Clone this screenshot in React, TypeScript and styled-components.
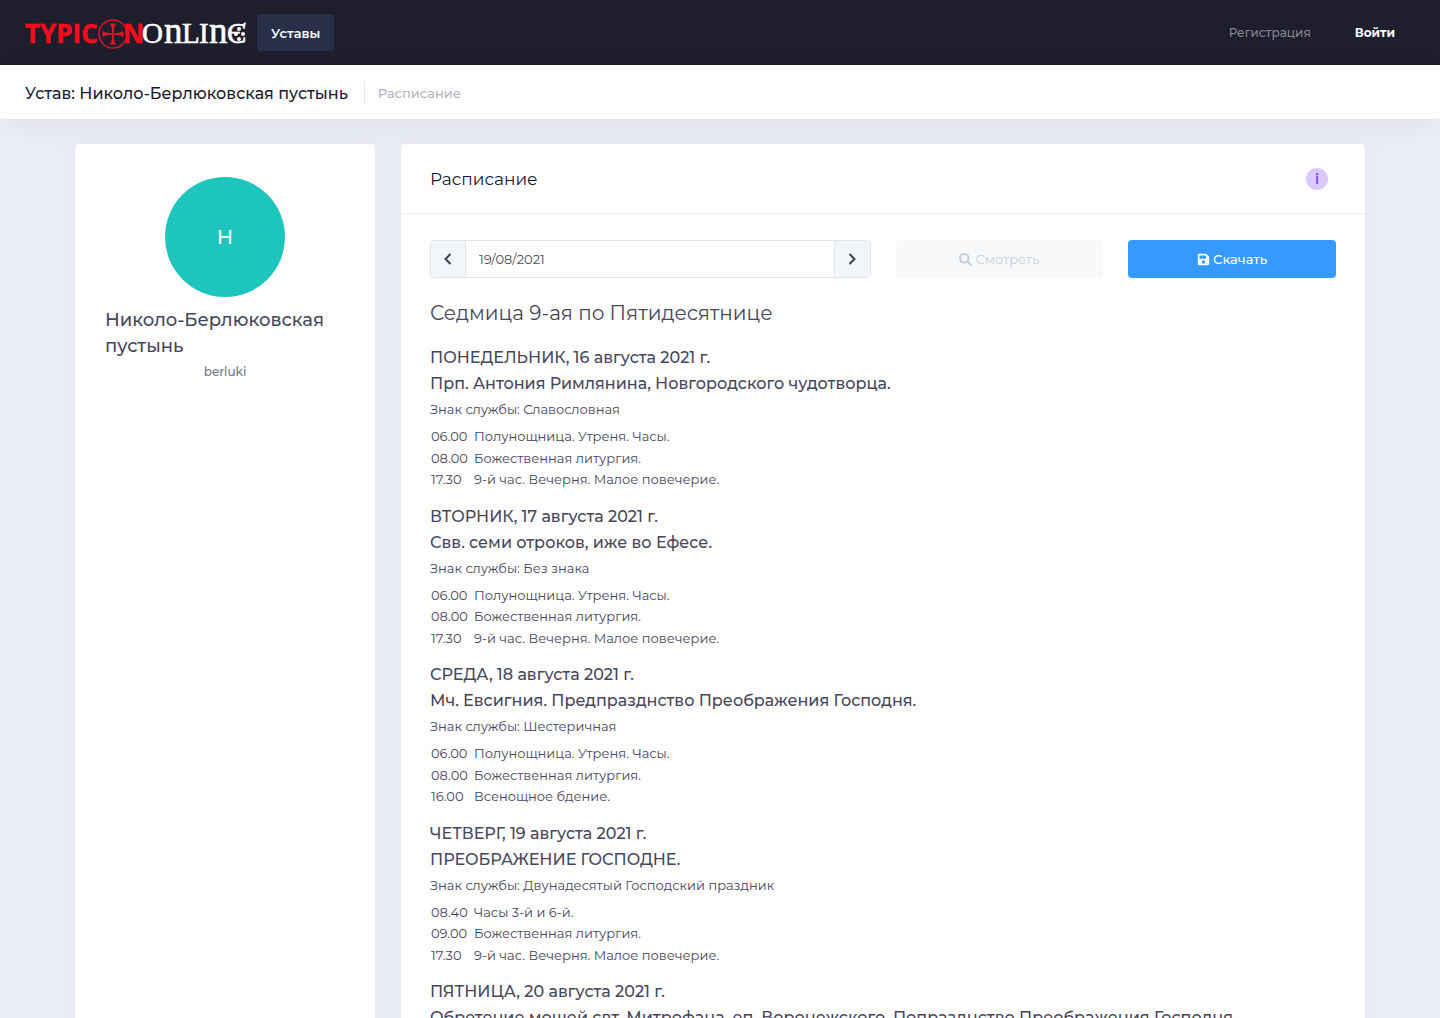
import React, { useState } from "react";
import styled, { createGlobalStyle } from "styled-components";
import { FaSave, FaSearch } from "react-icons/fa";

const GlobalStyle = createGlobalStyle`
  *, *::before, *::after { box-sizing: border-box; }
  html { scrollbar-width: none; }
  body {
    margin: 0;
    background: #edeff8;
    color: #48465b;
    font-family: Montserrat, Inter, "Noto Sans", sans-serif;
    font-size: 13px;
    font-weight: 400;
  }
  h1, h2, h3, h4, p { margin: 0; font-weight: 400; }
  button, input { font: inherit; color: inherit; margin: 0; }
  a { color: inherit; text-decoration: none; }
`;

const Page = styled.div`
  display: flex;
  flex-direction: column;
  min-height: 100vh;
`;

const TopBar = styled.header`
  display: flex;
  align-items: center;
  justify-content: space-between;
  height: 65px;
  padding: 0 24px;
  background: #1e1e2d;
`;

const TopGroup = styled.div`
  display: flex;
  align-items: center;
  gap: 8px;
`;

const BrandLink = styled.a`
  display: block;
`;

const LogoDrawing = styled.svg`
  display: block;
`;

const MenuLink = styled.a`
  display: flex;
  align-items: center;
  height: 37px;
  padding: 0 14px;
  border-radius: 4px;
  background: #282f48;
  color: #fff;
  font-weight: 600;
`;

const UserNav = styled.nav`
  display: flex;
  gap: 44px;
  padding-right: 21px;
`;

const UserLink = styled.a<{ $strong?: boolean }>`
  color: ${(p) => (p.$strong ? "#fff" : "#868692")};
  font-size: 12px;
  font-weight: ${(p) => (p.$strong ? 700 : 500)};
`;

const SubHeader = styled.div`
  display: flex;
  align-items: center;
  height: 54px;
  padding: 2px 25px 0;
  background: #fff;
  box-shadow: 0 10px 30px rgba(82, 63, 105, 0.08);
`;

const SubTitle = styled.h1`
  color: #1a1a2f;
  font-size: 16px;
  font-weight: 500;
`;

const Divider = styled.span`
  width: 1px;
  height: 22px;
  margin: 0 13px 0 16px;
  background: #e7e8ef;
`;

const Crumb = styled.a`
  color: #b4b3c0;
  font-weight: 500;
`;

const Main = styled.main`
  display: flex;
  flex: 1;
  align-items: stretch;
  gap: 26px;
  width: 100%;
  max-width: 1340px;
  margin: 0 auto;
  padding: 25px 25px;
`;

const Card = styled.section`
  border-radius: 4px;
  background: #fff;
  box-shadow: 0 0 30px rgba(82, 63, 105, 0.05);
`;

const ProfileCard = styled(Card)`
  display: flex;
  flex: 0 0 300px;
  flex-direction: column;
  align-items: center;
  padding: 33px 30px;
`;

const Avatar = styled.div`
  display: flex;
  align-items: center;
  justify-content: center;
  width: 120px;
  height: 120px;
  border-radius: 50%;
  background: #1dc5bd;
  color: #fff;
  font-size: 20px;
  font-weight: 500;
`;

const ProfileName = styled.h3`
  width: 100%;
  margin-top: 10px;
  font-size: 18px;
  font-weight: 500;
  line-height: 26px;
`;

const ProfileId = styled.p`
  margin-top: 3px;
  color: #74788d;
  font-size: 12px;
  font-weight: 500;
  line-height: 20px;
`;

const ScheduleCard = styled(Card)`
  flex: 1;
  min-width: 0;
`;

const CardHead = styled.div`
  display: flex;
  align-items: center;
  justify-content: space-between;
  height: 70px;
  padding: 0 37px 0 29px;
  border-bottom: 1px solid #ebedf2;
`;

const CardTitle = styled.h2`
  color: #1a1a2f;
  font-size: 17px;
`;

const InfoButton = styled.button`
  display: flex;
  align-items: center;
  justify-content: center;
  width: 22px;
  height: 22px;
  padding: 0;
  border: 0;
  border-radius: 50%;
  background: #d9c9fd;
  color: #8045f5;
  font-size: 14px;
  font-weight: 600;
`;

const CardBody = styled.div`
  padding: 26px 29px;
`;

const Controls = styled.form`
  display: grid;
  grid-template-columns: repeat(4, 1fr);
  gap: 25px;
`;

const DateGroup = styled.div`
  display: flex;
  grid-column: span 2;
  height: 38px;
  overflow: hidden;
  border: 1px solid #e2e5ec;
  border-radius: 4px;
`;

const StepButton = styled.button`
  display: flex;
  flex: 0 0 34px;
  align-items: center;
  justify-content: center;
  padding: 0;
  border: 0;
  background: #f3f6f9;

  &:last-child { flex-basis: 35px; }
`;

const DateInput = styled.input`
  flex: 1;
  min-width: 0;
  padding: 0 13px;
  border: solid #e2e5ec;
  border-width: 0 1px;
  outline: 0;
  background: #fff;
  color: #495057;
`;

const ActionButton = styled.button<{ $primary?: boolean }>`
  display: flex;
  align-items: center;
  justify-content: center;
  gap: 3px;
  height: 38px;
  padding: 0;
  border: 0;
  border-radius: 4px;
  background: ${(p) => (p.$primary ? "#3699ff" : "#f7f9fb")};
  color: ${(p) => (p.$primary ? "#fff" : "#c6cfde")};
  font-weight: ${(p) => (p.$primary ? 500 : 400)};
`;

const WeekTitle = styled.h3`
  margin: 20px 0 17px;
  font-size: 20px;
  line-height: 30px;
`;

const DayBlock = styled.article`
  padding-bottom: 13px;
`;

const DayLine = styled.h4`
  font-size: 16px;
  font-weight: 500;
  line-height: 26px;
`;

const Sign = styled.p`
  margin-bottom: 5px;
  line-height: 24px;
`;

const Services = styled.table`
  border-collapse: collapse;

  th, td {
    padding: 1px;
    font-weight: 400;
    text-align: left;
    line-height: 1.5;
  }

  th { width: 43px; }
`;

const Chevron = ({ next }: { next?: boolean }) => (
  <svg width="14" height="14" viewBox="0 0 14 14" fill="none" stroke="#3f3d56" strokeWidth="2" aria-hidden="true">
    <path d={next ? "M4.5 2 9.5 7l-5 5" : "M9.5 2l-5 5 5 5"} />
  </svg>
);

const Logo = () => (
  <LogoDrawing width="225" height="54" viewBox="0 -10 225 54" aria-hidden="true">
    <g fill="#ff0a1c" stroke="#ff0a1c" strokeWidth="0.4" fontFamily="Open Sans" fontWeight="700" fontSize="26">
      <text x="1" y="27">TYPIC</text>
      <text x="99" y="27">N</text>
    </g>
    <circle cx="89" cy="18" r="14" fill="none" stroke="#e01526" strokeWidth="1.4" />
    <path
      fill="#e01526"
      d="M85.500 7.500h7C90.500 9.500 90 12 89.800 17.200 95 17 97.500 16.500 99.500 14.500v7C97.500 19.500 95 19 89.800 18.800 90 24 90.500 26.500 92.500 28.500h-7C87.500 26.500 88 24 88.200 18.800 83 19 80.500 19.500 78.500 21.500v-7C80.500 16.500 83 17 88.200 17.200 88 12 87.500 9.500 85.500 7.500z"
    />
    <g fill="#fff" stroke="#fff" strokeWidth="0.6" fontFamily="Liberation Serif" fontSize="29">
      <text x="118" y="27">O</text>
      <text x="140" y="27" fontSize="37">n</text>
      <text x="158" y="27">L</text>
      <text x="175" y="27">I</text>
      <text x="185" y="27" fontSize="37">n</text>
      <text x="203" y="27">Є</text>
    </g>
    <g fill="#fff">
      <circle cx="215" cy="13" r="2" />
      <circle cx="212" cy="18" r="2" />
      <circle cx="219" cy="18" r="2" />
      <circle cx="215" cy="23" r="2" />
      <path d="M217 9l5-3-1 5z" />
    </g>
  </LogoDrawing>
);

type Day = { date: string; feast: string; sign: string; services: [string, string][] };

const days: Day[] = [
  {
    date: "ПОНЕДЕЛЬНИК, 16 августа 2021 г.",
    feast: "Прп. Антония Римлянина, Новгородского чудотворца.",
    sign: "Славословная",
    services: [
      ["06.00", "Полунощница. Утреня. Часы."],
      ["08.00", "Божественная литургия."],
      ["17.30", "9-й час. Вечерня. Малое повечерие."],
    ],
  },
  {
    date: "ВТОРНИК, 17 августа 2021 г.",
    feast: "Свв. семи отроков, иже во Ефесе.",
    sign: "Без знака",
    services: [
      ["06.00", "Полунощница. Утреня. Часы."],
      ["08.00", "Божественная литургия."],
      ["17.30", "9-й час. Вечерня. Малое повечерие."],
    ],
  },
  {
    date: "СРЕДА, 18 августа 2021 г.",
    feast: "Мч. Евсигния. Предпразднство Преображения Господня.",
    sign: "Шестеричная",
    services: [
      ["06.00", "Полунощница. Утреня. Часы."],
      ["08.00", "Божественная литургия."],
      ["16.00", "Всенощное бдение."],
    ],
  },
  {
    date: "ЧЕТВЕРГ, 19 августа 2021 г.",
    feast: "ПРЕОБРАЖЕНИЕ ГОСПОДНЕ.",
    sign: "Двунадесятый Господский праздник",
    services: [
      ["08.40", "Часы 3-й и 6-й."],
      ["09.00", "Божественная литургия."],
      ["17.30", "9-й час. Вечерня. Малое повечерие."],
    ],
  },
  {
    date: "ПЯТНИЦА, 20 августа 2021 г.",
    feast: "Обретение мощей свт. Митрофана, еп. Воронежского. Попразднство Преображения Господня.",
    sign: "",
    services: [],
  },
];

export default function App() {
  const [date, setDate] = useState("19/08/2021");

  return (
    <Page>
      <GlobalStyle />
      <TopBar>
        <TopGroup>
          <BrandLink href="#" aria-label="Typicon Online">
            <Logo />
          </BrandLink>
          <MenuLink href="#">Уставы</MenuLink>
        </TopGroup>
        <UserNav>
          <UserLink href="#">Регистрация</UserLink>
          <UserLink href="#" $strong>Войти</UserLink>
        </UserNav>
      </TopBar>
      <SubHeader>
        <SubTitle>Устав: Николо-Берлюковская пустынь</SubTitle>
        <Divider />
        <Crumb href="#">Расписание</Crumb>
      </SubHeader>
      <Main>
        <ProfileCard>
          <Avatar>Н</Avatar>
          <ProfileName>Николо-Берлюковская пустынь</ProfileName>
          <ProfileId>berluki</ProfileId>
        </ProfileCard>
        <ScheduleCard>
          <CardHead>
            <CardTitle>Расписание</CardTitle>
            <InfoButton type="button">i</InfoButton>
          </CardHead>
          <CardBody>
            <Controls onSubmit={(e) => e.preventDefault()}>
              <DateGroup>
                <StepButton type="button" aria-label="Назад"><Chevron /></StepButton>
                <DateInput aria-label="Дата" value={date} onChange={(e) => setDate(e.target.value)} />
                <StepButton type="button" aria-label="Вперёд"><Chevron next /></StepButton>
              </DateGroup>
              <ActionButton type="submit" disabled><FaSearch size={13} />Смотреть</ActionButton>
              <ActionButton type="button" $primary><FaSave size={13} />Скачать</ActionButton>
            </Controls>
            <WeekTitle>Седмица 9-ая по Пятидесятнице</WeekTitle>
            {days.map((day) => (
              <DayBlock key={day.date}>
                <DayLine>{day.date}</DayLine>
                <DayLine>{day.feast}</DayLine>
                {day.sign && <Sign>Знак службы: {day.sign}</Sign>}
                {day.services.length > 0 && (
                  <Services>
                    <tbody>
                      {day.services.map(([time, name]) => (
                        <tr key={time}>
                          <th scope="row">{time}</th>
                          <td>{name}</td>
                        </tr>
                      ))}
                    </tbody>
                  </Services>
                )}
              </DayBlock>
            ))}
          </CardBody>
        </ScheduleCard>
      </Main>
    </Page>
  );
}
